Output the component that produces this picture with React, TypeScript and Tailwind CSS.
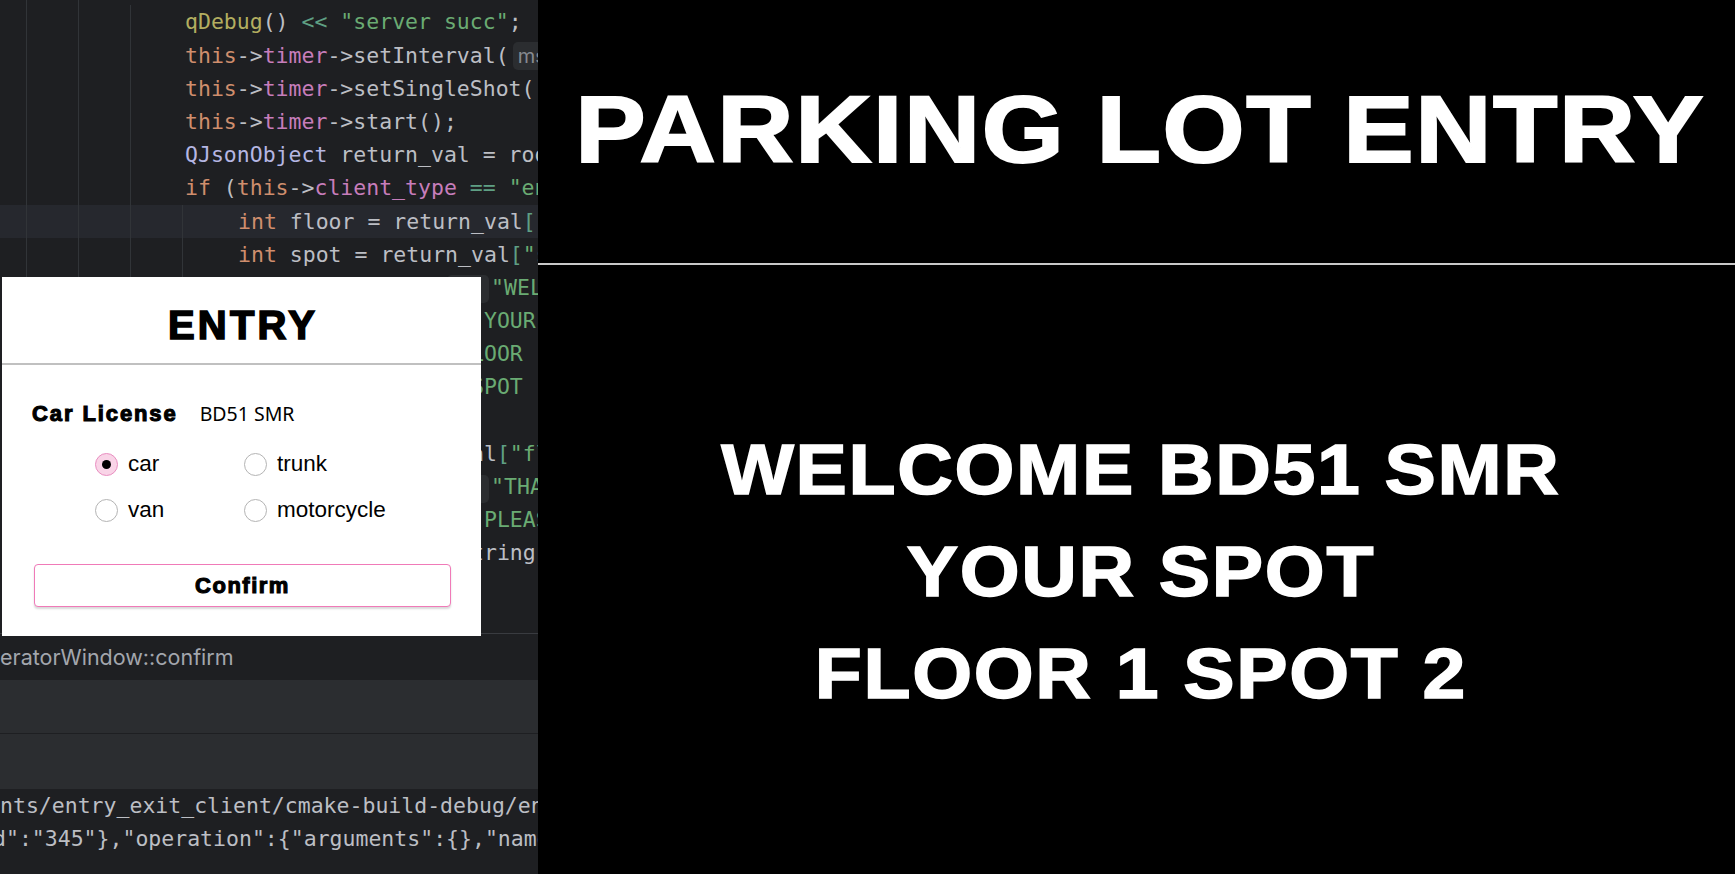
const mono = "font-['DejaVu_Sans_Mono',monospace]"
const arial = "font-['Liberation_Sans',Arial,sans-serif]"

const K = ({ children }: { children: React.ReactNode }) => <span className="text-[#cf8e6d]">{children}</span>
const F = ({ children }: { children: React.ReactNode }) => <span className="text-[#c77dbb]">{children}</span>
const S = ({ children }: { children: React.ReactNode }) => <span className="text-[#6aab73]">{children}</span>
const O = ({ children }: { children: React.ReactNode }) => <span className="text-[#5f9f84]">{children}</span>

const Hint = ({ children, cls }: { children: React.ReactNode; cls: string }) => (
  <span className={`inline-flex items-center justify-start px-[5px] h-[28px] rounded-[5px] bg-[#2b2d30] text-[#868a91] ${cls} font-['Inter',sans-serif]`}>
    {children}
  </span>
)

const CodeLine = ({ level, active, children }: { level: number; active?: boolean; children?: React.ReactNode }) => (
  <div className={`flex h-[33.2px] items-center whitespace-pre ${active ? "bg-[#26282e]" : ""}`}>
    <div className="w-[26px] h-full shrink-0" />
    {Array.from({ length: level - 1 }).map((_, i) => (
      <div key={i} className="w-[52px] h-full shrink-0 border-l border-[#313438]" />
    ))}
    <div className={`${level === 5 ? "pl-[4px]" : "pl-[3px]"} leading-[33.2px]`}>{children}</div>
  </div>
)

const Radio = ({ checked, label }: { checked?: boolean; label: string }) => (
  <div className="flex items-center gap-[10px] h-[23px]">
    {checked ? (
      <span className="w-[23px] h-[23px] rounded-full border-[1.5px] border-[#e98fc1] bg-[#f9d4e7] flex items-center justify-center shrink-0">
        <span className="w-[9px] h-[9px] rounded-full bg-black" />
      </span>
    ) : (
      <span className="w-[23px] h-[23px] rounded-full border-[1.5px] border-[#b4b4b4] bg-white shrink-0" />
    )}
    <span className={`text-[22.5px] leading-none text-black ${arial}`}>{label}</span>
  </div>
)

const EntryDialog = () => (
  <div className="absolute left-[2px] top-[277px] w-[479px] h-[359px] bg-white flex flex-col">
    {/* title */}
    <div className="h-[88px] pt-[28px] flex justify-center border-b-2 border-[#c0c0c0]">
      <h2 className={`text-[40px] leading-none font-bold text-black tracking-[3.2px] pl-[3px] [-webkit-text-stroke:1.6px_#000] ${arial}`}>ENTRY</h2>
    </div>

    {/* license */}
    <div className="flex items-baseline mt-[38px] pl-[30px]">
      <span className={`text-[22px] leading-none font-bold text-black tracking-[1.9px] [-webkit-text-stroke:1.1px_#000] ${arial}`}>Car License</span>
      <span className="ml-[22px] text-[19.5px] leading-none text-black font-['Noto_Sans',sans-serif]">BD51 SMR</span>
    </div>

    {/* vehicle type */}
    <div className="grid grid-cols-[149px_149px] gap-y-[23px] mt-[28px] ml-[93px]">
      <Radio checked label="car" />
      <Radio label="trunk" />
      <Radio label="van" />
      <Radio label="motorcycle" />
    </div>

    <button className="mt-[42px] ml-[32px] w-[417px] h-[43px] rounded-[4px] border-[1.5px] border-[#f07ab8] bg-white shadow-[0_2px_2px_rgba(0,0,0,0.15)] flex items-center justify-center">
      <span className={`text-[22px] leading-none font-bold text-black tracking-[1.5px] [-webkit-text-stroke:1.1px_#000] ${arial}`}>Confirm</span>
    </button>
  </div>
)

const Editor = () => (
  <div className="relative w-[538px] h-full shrink-0 overflow-hidden bg-[#1e1f22] flex flex-col">
    {/* code */}
    <div className={`h-[634px] shrink-0 overflow-hidden border-b border-[#393b40] text-[21.5px] text-[#bcbec4] ${mono}`}>
      <div className="-mt-[27.8px]">
        <CodeLine level={3}><K>if</K> (reply-&gt;error() == QNetworkReply::NoError) {"{"}</CodeLine>
        <CodeLine level={4}><span className="text-[#b3ae60]">qDebug</span>() <O>&lt;&lt;</O> <S>"server succ"</S>;</CodeLine>
        <CodeLine level={4}><K>this</K>-&gt;<F>timer</F>-&gt;setInterval(<span className="ml-[4px]" /><Hint cls="w-[60px] text-[20px]">ms:</Hint></CodeLine>
        <CodeLine level={4}><K>this</K>-&gt;<F>timer</F>-&gt;setSingleShot( <K>true</K>);</CodeLine>
        <CodeLine level={4}><K>this</K>-&gt;<F>timer</F>-&gt;start();</CodeLine>
        <CodeLine level={4}><span className="text-[#b5b6e3]">QJsonObject</span> return_val = root.value(<S>"data"</S>);</CodeLine>
        <CodeLine level={4}><K>if</K> (<K>this</K>-&gt;<F>client_type</F> <O>==</O> <S>"entry"</S>) {"{"}</CodeLine>
        <CodeLine level={5} active><K>int</K> floor = return_val<O>[</O><S>"floor"</S><O>]</O>.toInt();</CodeLine>
        <CodeLine level={5}><K>int</K> spot = return_val<O>[</O><S>"spot"</S><O>]</O>.toInt();</CodeLine>
        <CodeLine level={5}>ui-&gt;lb-&gt;setText(<span className="ml-[2px]" /><Hint cls="w-[42px] text-[15px]">text</Hint><span className="ml-[2px]" /><S>"WELCOME "</S> + license</CodeLine>
        <CodeLine level={5}>{"                  "}<S>"YOUR SPOT "</S> +</CodeLine>
        <CodeLine level={5}>{"                "}<S>"FLOOR "</S> + QString::number(floor) +</CodeLine>
        <CodeLine level={5}>{"                 "}<S>"SPOT "</S> + QString::number(spot));</CodeLine>
        <CodeLine level={5} />
        <CodeLine level={5}><K>auto</K> fl = return_val<O>[</O><S>"floor"</S><O>]</O>;</CodeLine>
        <CodeLine level={5}>ui-&gt;lb-&gt;setText(<span className="ml-[2px]" /><Hint cls="w-[42px] text-[15px]">text</Hint><span className="ml-[2px]" /><S>"THANK YOU"</S></CodeLine>
        <CodeLine level={5}>{"                  "}<S>"PLEASE LEAVE"</S>);</CodeLine>
        <CodeLine level={5}>{"              "}.toString</CodeLine>
        <CodeLine level={5} />
        <CodeLine level={5} />
        <CodeLine level={4} />
      </div>
    </div>

    {/* breadcrumb */}
    <div className="h-[46px] shrink-0 flex items-center text-[21.5px] text-[#a3a6ad] font-['Inter',sans-serif] whitespace-pre">
      eratorWindow::confirm
    </div>

    {/* run tool window */}
    <div className="h-[54px] shrink-0 bg-[#2b2d30] border-b border-[#1e1f22]" />
    <div className="h-[55px] shrink-0 bg-[#2b2d30]" />

    {/* console */}
    <div className={`flex-1 text-[21.5px] leading-[33px] text-[#bcbec4] whitespace-pre ${mono}`}>
      <div>nts/entry_exit_client/cmake-build-debug/entry_exit_client</div>
      <div className="-ml-[7px]">d":"345"{"}"},"operation":{"{"}"arguments":{"{}"},"name":"entry"{"}"}</div>
    </div>

    <EntryDialog />
  </div>
)

const Display = () => (
  <div className={`flex-1 h-full bg-black flex flex-col text-white font-bold ${arial}`}>
    <div className="h-[265px] shrink-0 pt-[82px] flex justify-center border-b-2 border-[#c8c8c8]">
      <h1 className="text-[95px] leading-none tracking-[1.5px] pl-[6px] scale-x-[1.11] [-webkit-text-stroke:2px_white] whitespace-nowrap">PARKING LOT ENTRY</h1>
    </div>
    <div className="pt-[154px] flex flex-col items-center text-[70px] leading-[102px] tracking-[1.5px] pl-[8px] scale-x-[1.1] [-webkit-text-stroke:1.5px_white] whitespace-nowrap">
      <p>WELCOME BD51 SMR</p>
      <p>YOUR SPOT</p>
      <p>FLOOR 1 SPOT 2</p>
    </div>
  </div>
)

const App = () => {
  return (
    <div className="w-[1735px] h-[874px] flex overflow-hidden">
      <Editor />
      <Display />
    </div>
  )
}

export default App
